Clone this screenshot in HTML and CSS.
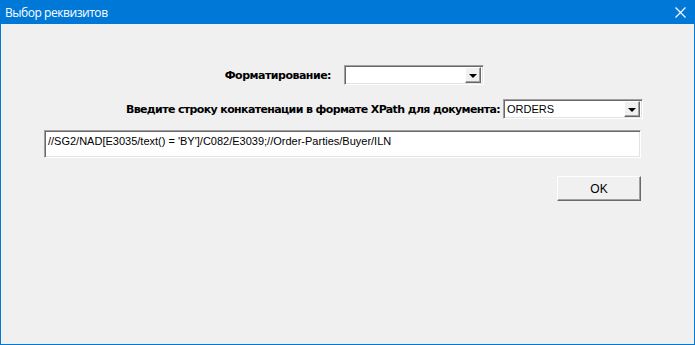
FILE: index.html
```html
<!DOCTYPE html>
<html lang="ru">
<head>
    <meta charset="UTF-8">
    <title>Выбор реквизитов</title>
    <link rel="stylesheet" href="styles.css">
</head>
<body>
    <div class="window">
        <div class="title-bar">
            <span class="title">Выбор реквизитов</span>
            <svg class="close" width="11" height="11" viewBox="0 0 11 11">
                <path d="M0.5 0.5 L10.5 10.5 M10.5 0.5 L0.5 10.5" stroke="#fff" stroke-width="1.2"/>
            </svg>
        </div>

        <div class="content">
            <div class="row row-format">
                <label class="label">Форматирование:</label>
                <div class="combo combo-format">
                    <span class="combo-value"></span>
                    <span class="combo-button"><span class="arrow"></span></span>
                </div>
            </div>

            <div class="row row-doc">
                <label class="label label-doc">Введите строку конкатенации в формате XPath для документа:</label>
                <div class="combo combo-doc">
                    <span class="combo-value">ORDERS</span>
                    <span class="combo-button"><span class="arrow"></span></span>
                </div>
            </div>

            <div class="text-field">//SG2/NAD[E3035/text() = 'BY']/C082/E3039;//Order-Parties/Buyer/ILN</div>

            <div class="row row-buttons">
                <button class="button">OK</button>
            </div>
        </div>
    </div>
</body>
</html>
```

FILE: styles.css
```css
* {
    margin: 0;
    padding: 0;
    box-sizing: border-box;
}

body {
    width: 695px;
    height: 345px;
    overflow: hidden;
    font-family: 'Liberation Sans', Arial, sans-serif;
    background: #f0f0f0;
}

.window {
    width: 695px;
    height: 345px;
    display: flex;
    flex-direction: column;
    border: 1px solid #0078d7;
    border-top: none;
    background: #f0f0f0;
}

.title-bar {
    height: 24px;
    margin: 0 -1px;
    background: #0078d7;
    display: flex;
    align-items: center;
    justify-content: space-between;
    padding: 0 9px 0 5px;
    color: #fff;
}

.title {
    font-family: 'Open Sans', 'Noto Sans', sans-serif;
    font-size: 12px;
    letter-spacing: -0.45px;
}

.content {
    flex: 1;
    display: flex;
    flex-direction: column;
    padding: 41px 53px 0 43px;
}

.row {
    display: flex;
    align-items: center;
    justify-content: flex-end;
}

.row-format {
    padding-right: 157px;
}

.row-doc {
    margin-top: 14px;
    margin-right: -2px;
}

.label {
    font-family: 'DejaVu Sans', sans-serif;
    font-weight: bold;
    font-size: 11px;
    color: #000;
    margin-right: 13px;
    letter-spacing: -0.5px;
}

.label-doc {
    margin-right: 3px;
    letter-spacing: -0.63px;
}

.combo {
    height: 20px;
    display: flex;
    align-items: center;
    background: #fff;
    border-top: 1px solid #a0a0a0;
    border-left: 1px solid #a0a0a0;
    border-right: 1px solid #fff;
    border-bottom: 1px solid #fff;
    box-shadow: inset 1px 1px 0 #696969, inset -1px -1px 0 #e3e3e3;
    padding: 2px 2px 2px 3px;
}

.combo-format {
    width: 140px;
}

.combo-doc {
    width: 140px;
}

.combo-value {
    flex: 1;
    font-family: 'Liberation Sans', Arial, sans-serif;
    font-size: 11px;
    color: #000;
}

.combo-button {
    width: 16px;
    height: 16px;
    display: flex;
    align-items: center;
    justify-content: center;
    background: #f0f0f0;
    border-top: 1px solid #fff;
    border-left: 1px solid #fff;
    border-right: 1px solid #696969;
    border-bottom: 1px solid #696969;
    box-shadow: inset -1px -1px 0 #a0a0a0;
}

.arrow {
    width: 0;
    height: 0;
    border-left: 4px solid transparent;
    border-right: 4px solid transparent;
    border-top: 4px solid #000;
    margin-top: 1px;
}

.text-field {
    height: 28px;
    margin-top: 11px;
    background: #fff;
    border-top: 1px solid #a0a0a0;
    border-left: 1px solid #a0a0a0;
    border-right: 1px solid #fff;
    border-bottom: 1px solid #fff;
    box-shadow: inset 1px 1px 0 #696969, inset -1px -1px 0 #e3e3e3;
    padding: 3px 3px 0 3px;
    font-family: 'Liberation Sans', Arial, sans-serif;
    font-size: 11px;
    line-height: 14px;
    color: #000;
}

.row-buttons {
    margin-top: 18px;
}

.button {
    width: 84px;
    height: 25px;
    background: #f0f0f0;
    border-top: 1px solid #fff;
    border-left: 1px solid #fff;
    border-right: 1px solid #696969;
    border-bottom: 1px solid #696969;
    box-shadow: inset -1px -1px 0 #a0a0a0;
    font-family: 'Liberation Sans', Arial, sans-serif;
    font-size: 12px;
    color: #000;
}
```
